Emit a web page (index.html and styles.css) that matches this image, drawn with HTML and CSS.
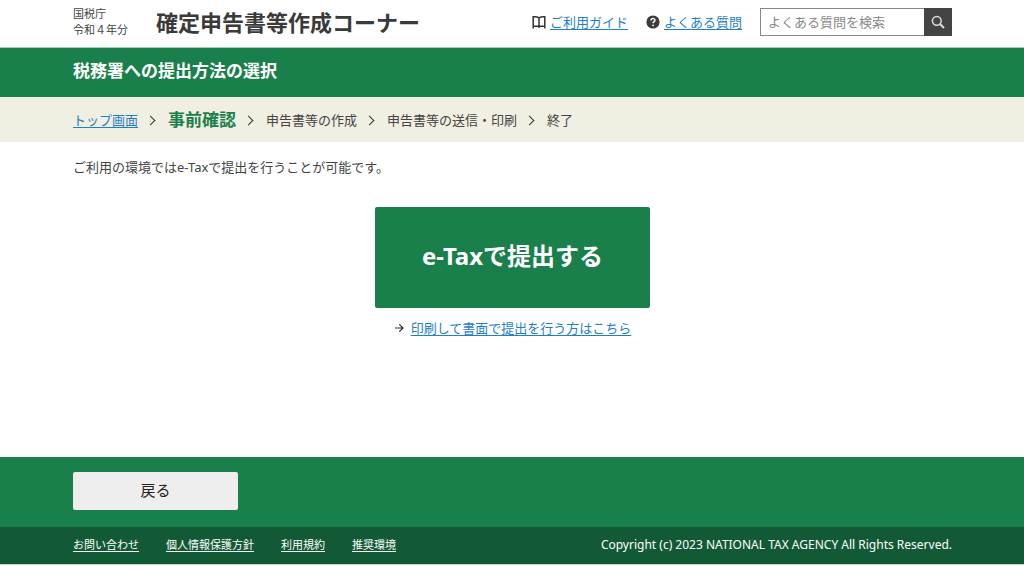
FILE: index.html
```
<!DOCTYPE html>
<html lang="ja">
<head>
<meta charset="utf-8">
<meta name="viewport" content="width=device-width, initial-scale=1">
<title>税務署への提出方法の選択</title>
<link rel="stylesheet" href="styles.css">
</head>
<body>
<header class="site-header">
  <div class="inner header-row">
    <p class="agency">国税庁<br>令和４年分</p>
    <div class="site-name">確定申告書等作成コーナー</div>
    <nav class="help-links">
      <span class="help-item">
        <svg class="icon" viewBox="0 0 14 14" aria-hidden="true"><path d="M7 2.800C5.500 1.800 3.500 1.600 1.200 1.800V11.300H5.300C6.300 11.300 7 11.800 7 12.800C7 11.800 7.700 11.300 8.700 11.300H12.800V1.800C10.500 1.600 8.500 1.800 7 2.800ZM7 2.800V12.800M1.200 11V13.600M12.800 11V13.600" fill="none" stroke="#333" stroke-width="1.500"/></svg>
        <a href="#">ご利用ガイド</a>
      </span>
      <span class="help-item">
        <svg class="icon" viewBox="0 0 14 14" aria-hidden="true"><circle cx="7" cy="7" r="6.600" fill="#3c3c3c"/><path d="M5 5.500C5 2.900 9 2.900 9 5.300C9 6.700 7 6.600 7 8.300" fill="none" stroke="#fff" stroke-width="1.400"/><circle cx="7" cy="10.300" r=".9" fill="#fff"/></svg>
        <a href="#">よくある質問</a>
      </span>
    </nav>
    <form class="search">
      <input class="search-box" type="text" aria-label="よくある質問を検索" placeholder="よくある質問を検索">
      <button class="search-button" type="button" aria-label="検索">
        <svg class="icon" viewBox="0 0 14 14" aria-hidden="true"><circle cx="5.800" cy="5.800" r="4.400" fill="none" stroke="#ddd" stroke-width="1.500"/><path d="M9 9L13 13" stroke="#ddd" stroke-width="2"/></svg>
      </button>
    </form>
  </div>
</header>
<div class="title-bar">
  <div class="inner"><h1 class="page-title">税務署への提出方法の選択</h1></div>
</div>
<nav class="steps-bar" aria-label="手順">
  <ol class="inner steps">
    <li class="step"><a href="#">トップ画面</a></li>
    <li class="step step-current" aria-current="step">事前確認</li>
    <li class="step">申告書等の作成</li>
    <li class="step">申告書等の送信・印刷</li>
    <li class="step">終了</li>
  </ol>
</nav>
<main class="inner content">
  <p class="lead">ご利用の環境ではe-Taxで提出を行うことが可能です。</p>
  <div class="choices">
    <button class="submit-button" type="button">e-Taxで提出する</button>
    <p class="paper">
      <svg class="arrow" viewBox="0 0 10 10" aria-hidden="true"><path d="M1 5H9M5.300 1.300L9 5L5.300 8.700" fill="none" stroke="#333" stroke-width="1.200"/></svg>
      <a href="#">印刷して書面で提出を行う方はこちら</a>
    </p>
  </div>
</main>
<div class="action-bar">
  <div class="inner"><button class="back-button" type="button">戻る</button></div>
</div>
<footer class="site-footer">
  <div class="inner footer-row">
    <nav class="footer-links">
      <a href="#">お問い合わせ</a>
      <a href="#">個人情報保護方針</a>
      <a href="#">利用規約</a>
      <a href="#">推奨環境</a>
    </nav>
    <small class="copyright">Copyright (c) 2023 NATIONAL TAX AGENCY All Rights Reserved.</small>
  </div>
</footer>
</body>
</html>
```
FILE: styles.css
```
* {
  box-sizing: border-box;
}

body {
  margin: 0;
  background: #fff;
  color: #444;
  font: 13px/20px "Noto Sans", "Noto Sans CJK JP", sans-serif;
}

p,
h1,
ol {
  margin: 0;
  padding: 0;
}

button,
input {
  font: inherit;
}

a {
  color: #1f80c6;
  text-decoration: underline;
  text-underline-offset: 2px;
}

.inner {
  width: 100%;
  max-width: 880px;
  margin: 0 auto;
  padding-left: 1px;
}

.site-header {
  border-bottom: 1px solid #a3cfb6;
}

.header-row {
  display: flex;
  align-items: center;
  min-height: 47px;
  padding-bottom: 3px;
}

.agency {
  font-size: 11px;
  line-height: 16px;
  white-space: nowrap;
}

.site-name {
  margin-left: 28px;
  color: #3a3a3a;
  font-size: 22px;
  line-height: 32px;
  font-weight: bold;
  white-space: nowrap;
}

.help-links {
  display: flex;
  gap: 18px;
  margin-left: auto;
  white-space: nowrap;
}

.help-item {
  display: flex;
  align-items: center;
  gap: 4px;
}

.icon {
  display: block;
  flex: none;
  width: 14px;
  height: 14px;
}

.search {
  display: flex;
  margin-left: 18px;
}

.search-box {
  width: 164px;
  height: 28px;
  padding: 0 7px;
  border: 1px solid #888;
  border-right: 0;
  border-radius: 0;
  color: #444;
}

.search-box::placeholder {
  color: #888;
}

.search-button {
  display: flex;
  align-items: center;
  justify-content: center;
  width: 28px;
  height: 28px;
  padding: 0;
  border: 0;
  background: #444;
}

.title-bar {
  padding: 11px 0 14px;
  background: #1a804b;
  color: #fff;
}

.page-title {
  font-size: 17px;
  line-height: 24px;
}

.steps-bar {
  padding: 11px 0 10px;
  background: #f1eee2;
}

.steps {
  display: flex;
  align-items: center;
  list-style: none;
  white-space: nowrap;
}

.step {
  display: flex;
  align-items: center;
  line-height: 24px;
}

.step + .step::before {
  content: "";
  width: 6px;
  height: 6px;
  margin: 0 14px 0 9px;
  border-top: 1px solid #333;
  border-right: 1px solid #333;
  transform: rotate(45deg);
}

.step-current {
  color: #1a804b;
  font-size: 17px;
  font-weight: bold;
}

.content {
  min-height: 315px;
  padding-top: 15px;
}

.choices {
  display: flex;
  flex-direction: column;
  align-items: center;
  margin-top: 30px;
}

.submit-button {
  width: 275px;
  max-width: 100%;
  padding: 32px 16px 36px;
  border: 0;
  border-radius: 2px;
  background: #1a804b;
  color: #fff;
  font-size: 24px;
  line-height: 33px;
  font-weight: bold;
}

.paper {
  display: flex;
  align-items: center;
  gap: 7px;
  margin-top: 10px;
}

.arrow {
  flex: none;
  width: 10px;
  height: 10px;
}

.action-bar {
  padding: 15px 0 17px;
  background: #1a804b;
}

.back-button {
  display: block;
  width: 165px;
  padding: 6px 7px 8px;
  border: 0;
  border-radius: 2px;
  background: #eee;
  color: #222;
  font-size: 15px;
  line-height: 24px;
}

.site-footer {
  padding: 8px 0 9px;
  border-bottom: 1px solid #c4d6cb;
  background: #125a35;
  color: #fff;
  font-size: 11px;
}

.footer-row {
  display: flex;
  flex-wrap: wrap;
  justify-content: space-between;
}

.footer-links {
  display: flex;
  gap: 27px;
}

.footer-links a {
  color: #fff;
}

.copyright {
  font-size: 12px;
}
```
